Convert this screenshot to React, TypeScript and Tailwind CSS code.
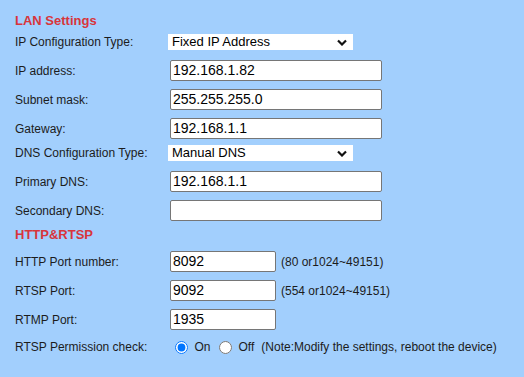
import React from 'react';

const font = { fontFamily: '"Liberation Sans", Arial, sans-serif' };

function Label({ children }: { children: React.ReactNode }) {
  return <div className="w-[155px] shrink-0 text-[12px] leading-[16px] text-[#1c1c1c]">{children}</div>;
}

// looks like a native select, drawn as a plain box
function Select({ value }: { value: string }) {
  return (
    <div className="flex items-center justify-between w-[185px] h-[16px] -ml-[2px] bg-white pl-[4px] pr-[6px] cursor-default">
      <span className="text-[13px] leading-[16px] text-black">{value}</span>
      <svg width="10" height="7" viewBox="0 0 10 7">
        <path d="M1 1.5 L5 5.5 L9 1.5" fill="none" stroke="#111" strokeWidth="2.2" />
      </svg>
    </div>
  );
}

function TextInput({ value, small }: { value: string; small?: boolean }) {
  return (
    <input
      type="text"
      defaultValue={value}
      className={`${small ? 'w-[106px]' : 'w-[212px]'} h-[21px] bg-white border border-[#767676] rounded-[2px] px-[2px] text-[14px] text-black outline-none`}
    />
  );
}

function Row({ children, className = 'h-[29px]' }: { children: React.ReactNode; className?: string }) {
  return <div className={`flex items-center pl-[15px] ${className}`}>{children}</div>;
}

export default function App() {
  return (
    <div className="w-[524px] h-[377px] bg-[#a2cffd] pt-[10px]" style={font}>
      {/* LAN Settings */}
      <Row className="h-[21px]">
        <div className="text-[13px] font-bold text-[#d8353b]">LAN Settings</div>
      </Row>
      <Row className="h-[16px] mt-[3px]">
        <Label>IP Configuration Type:</Label>
        <Select value="Fixed IP Address" />
      </Row>
      <Row className="h-[29px] mt-[6px]">
        <Label>IP address:</Label>
        <TextInput value="192.168.1.82" />
      </Row>
      <Row>
        <Label>Subnet mask:</Label>
        <TextInput value="255.255.255.0" />
      </Row>
      <Row>
        <Label>Gateway:</Label>
        <TextInput value="192.168.1.1" />
      </Row>
      <Row className="h-[16px] mt-[2px]">
        <Label>DNS Configuration Type:</Label>
        <Select value="Manual DNS" />
      </Row>
      <Row className="h-[29px] mt-[6px]">
        <Label>Primary DNS:</Label>
        <TextInput value="192.168.1.1" />
      </Row>
      <Row>
        <Label>Secondary DNS:</Label>
        <TextInput value="" />
      </Row>

      {/* HTTP&RTSP */}
      <Row className="h-[20px]">
        <div className="text-[13px] font-bold text-[#d8353b]">HTTP&amp;RTSP</div>
      </Row>
      <Row className="h-[29px] mt-[2px]">
        <Label>HTTP Port number:</Label>
        <TextInput value="8092" small />
        <span className="ml-[5px] text-[12px] text-[#1c1c1c]">(80 or1024~49151)</span>
      </Row>
      <Row>
        <Label>RTSP Port:</Label>
        <TextInput value="9092" small />
        <span className="ml-[5px] text-[12px] text-[#1c1c1c]">(554 or1024~49151)</span>
      </Row>
      <Row>
        <Label>RTMP Port:</Label>
        <TextInput value="1935" small />
      </Row>
      <Row className="h-[26px]">
        <Label>RTSP Permission check:</Label>
        <label className="flex items-center text-[12px] text-[#1c1c1c]">
          <input type="radio" name="perm" defaultChecked className="w-[13px] h-[13px] ml-[4.5px] mr-[7px] m-0" />
          On
        </label>
        <label className="flex items-center text-[12px] text-[#1c1c1c]">
          <input type="radio" name="perm" className="w-[13px] h-[13px] ml-[8px] mr-[7px] m-0" />
          Off
        </label>
        <span className="ml-[7px] text-[12px] text-[#1c1c1c]">(Note:Modify the settings, reboot the device)</span>
      </Row>
    </div>
  );
}
